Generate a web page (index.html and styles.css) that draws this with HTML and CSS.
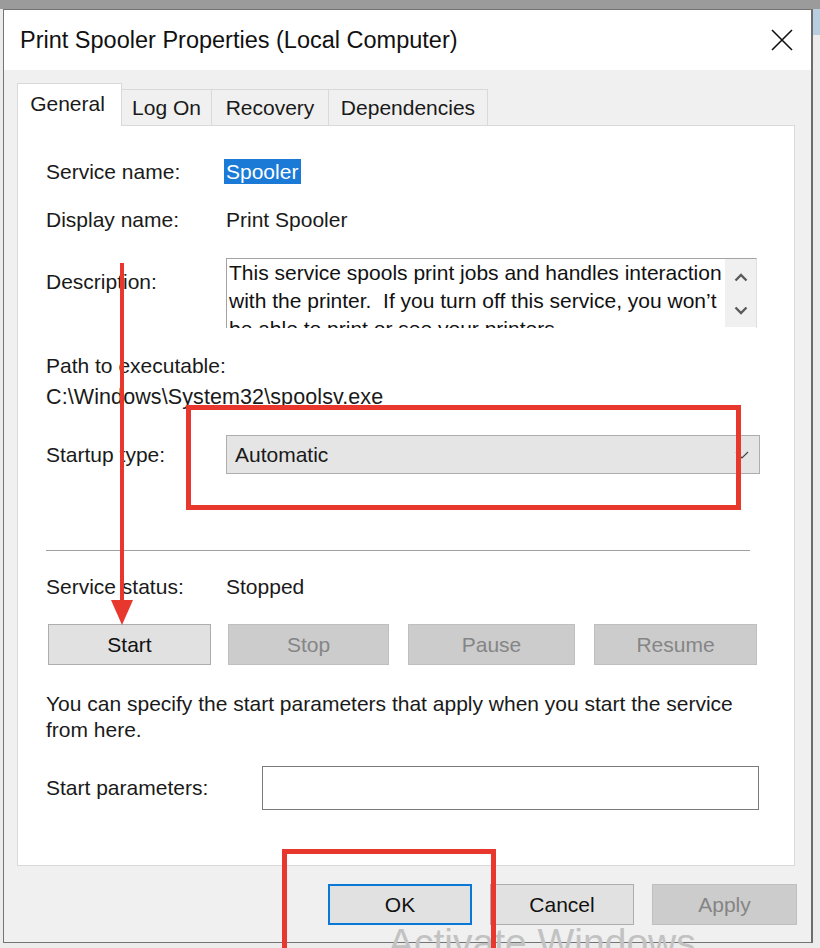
FILE: index.html
```html
<!DOCTYPE html>
<html>
<head>
<meta charset="utf-8">
<title>Print Spooler Properties</title>
<link rel="stylesheet" href="styles.css">
</head>
<body>
<div class="desktop">
  <div class="window">
    <div class="titlebar">
      <span class="title">Print Spooler Properties (Local Computer)</span>
      <svg class="close" width="22" height="22" viewBox="0 0 22 22"><path d="M1 1 L21 21 M21 1 L1 21" stroke="#111" stroke-width="1.6" fill="none"/></svg>
    </div>
    <div class="content">
      <div class="tabs">
        <div class="tab active t-general">General</div>
        <div class="tab t-logon">Log On</div>
        <div class="tab t-recovery">Recovery</div>
        <div class="tab t-deps">Dependencies</div>
      </div>
      <div class="panel">
        <div class="row r-name"><span class="label">Service name:</span><span class="value"><span class="selected">Spooler</span></span></div>
        <div class="row r-display"><span class="label">Display name:</span><span class="value">Print Spooler</span></div>
        <div class="row r-desc">
          <span class="label">Description:</span>
          <div class="descbox">
            <div class="desctext">This service spools print jobs and handles interaction<br>with the printer.&nbsp; If you turn off this service, you won’t<br>be able to print or see your printers.</div>
            <div class="scroll">
              <svg width="14" height="9" viewBox="0 0 14 9"><path d="M1.5 7.5 L7 2 L12.5 7.5" stroke="#5a5a5a" stroke-width="2.4" fill="none"/></svg>
              <svg width="14" height="9" viewBox="0 0 14 9"><path d="M1.5 1.5 L7 7 L12.5 1.5" stroke="#5a5a5a" stroke-width="2.4" fill="none"/></svg>
            </div>
          </div>
        </div>
        <div class="row r-path-label"><span class="label">Path to executable:</span></div>
        <div class="row r-path"><span class="path">C:\Windows\System32\spoolsv.exe</span></div>
        <div class="row r-startup">
          <span class="label">Startup type:</span>
          <div class="combo"><span>Automatic</span>
            <svg width="14" height="8" viewBox="0 0 14 8"><path d="M1 1 L7 7 L13 1" stroke="#444" stroke-width="1.2" fill="none"/></svg>
          </div>
        </div>
        <div class="separator"></div>
        <div class="row r-status"><span class="label">Service status:</span><span class="value">Stopped</span></div>
        <div class="svc-buttons">
          <button class="btn b-start">Start</button>
          <button class="btn disabled b-stop">Stop</button>
          <button class="btn disabled b-pause">Pause</button>
          <button class="btn disabled b-resume">Resume</button>
        </div>
        <p class="note">You can specify the start parameters that apply when you start the service<br>from here.</p>
        <div class="row r-params"><span class="label wide">Start parameters:</span><div class="input"></div></div>
      </div>
      <div class="footer">
        <button class="btn dlg default">OK</button>
        <button class="btn dlg">Cancel</button>
        <button class="btn dlg disabled apply">Apply</button>
      </div>
    </div>
  </div>
  <div class="watermark">Activate Windows</div>
  <div class="mark mark-startup"></div>
  <div class="mark mark-ok"></div>
  <svg class="arrow" width="26" height="366" viewBox="0 0 26 366">
    <rect x="11" y="0" width="4" height="340" fill="#e8382d"/>
    <polygon points="2,337 24,337 13,362" fill="#e8382d"/>
  </svg>
</div>
</body>
</html>
```

FILE: styles.css
```css
* { box-sizing: border-box; }
html, body { margin: 0; padding: 0; }
body {
  width: 820px;
  height: 948px;
  overflow: hidden;
  background:
    linear-gradient(#9b9b9b 0, #9b9b9b 9px, transparent 9px),
    linear-gradient(90deg, transparent 0, transparent 813px, #b9cde0 813px) 0 9px / 820px 26px no-repeat,
    #ececec;
  font-family: "Liberation Sans", Arial, sans-serif;
  color: #1a1a1a;
}
.desktop {
  position: relative;
  width: 820px;
  height: 948px;
  padding: 9px 0 0 3px;
  overflow: hidden;
}
.window {
  width: 810px;
  height: 934px;
  border: 1px solid #747474;
  border-right: 2px solid #6c6c6c;
  background: #f0f0f0;
  display: flex;
  flex-direction: column;
}
.titlebar {
  height: 60px;
  flex: none;
  background: #fff;
  display: flex;
  align-items: center;
  justify-content: space-between;
  padding: 0 18px 0 16px;
}
.title { font-size: 23.5px; color: #111; }
.close { display: block; }
.content { flex: 1; padding: 13px 0 0 13px; }
.tabs {
  display: flex;
  align-items: flex-end;
  height: 43px;
  margin-bottom: -1px;
  position: relative;
  z-index: 1;
}
.tab {
  font-size: 21px;
  height: 36px;
  margin-bottom: 1px;
  display: flex;
  align-items: center;
  justify-content: center;
  border: 1px solid #d9d9d9;
  border-bottom: none;
  border-left: none;
  background: #f0f0f0;
  color: #1a1a1a;
}
.tab.active {
  height: 43px;
  margin-bottom: 0;
  background: #fff;
  border-left: 1px solid #d9d9d9;
  padding: 0 4px 2px 0;
}
.t-general { width: 105px; }
.t-logon { width: 90px; }
.t-recovery { width: 117px; }
.t-deps { width: 159px; }
.panel {
  width: 778px;
  height: 741px;
  background: #fff;
  border: 1px solid #d9d9d9;
  padding: 0 0 0 28px;
}
.row {
  display: flex;
  align-items: center;
  font-size: 21px;
  line-height: 26px;
}
.label { width: 180px; flex: none; }
.label.wide { width: 216px; }
.r-name { margin-top: 33px; height: 26px; }
.selected {
  background: #1a7ad6;
  color: #fff;
  padding: 0 3px 0 2px;
  margin-left: -2px;
  display: inline-block;
  line-height: 25px;
}
.r-display { margin-top: 22px; height: 26px; }
.r-desc { margin-top: 25px; align-items: flex-start; height: 70px; }
.r-desc .label { padding-top: 11px; }
.descbox {
  width: 531px;
  height: 70px;
  border-top: 1px solid #a3a3a3;
  border-left: 1px solid #a3a3a3;
  border-right: 1px solid #e0e0e0;
  display: flex;
  overflow: hidden;
}
.desctext {
  flex: 1;
  padding-left: 2px;
  line-height: 28px;
  white-space: nowrap;
  overflow: hidden;
  color: #111;
}
.scroll {
  width: 31px;
  flex: none;
  background: #f0f0f0;
  display: flex;
  flex-direction: column;
  align-items: center;
  justify-content: space-between;
  padding: 14px 0 12px;
  height: 68px;
}
.scroll svg { display: block; }
.r-path-label { margin-top: 25px; height: 26px; }
.r-path { margin-top: 5px; height: 26px; }
.path { font-size: 21.5px; letter-spacing: 0.1px; }
.r-startup { margin-top: 25px; height: 39px; }
.combo {
  width: 534px;
  height: 39px;
  background: #e5e5e5;
  border: 1px solid #adadad;
  display: flex;
  align-items: center;
  justify-content: space-between;
  padding: 0 10px 0 8px;
}
.combo svg { display: block; }
.separator {
  margin-top: 76px;
  width: 704px;
  height: 2px;
  border-top: 1px solid #a0a0a0;
  border-bottom: 1px solid #fff;
}
.r-status { margin-top: 22px; height: 26px; }
.btn {
  font-family: "Liberation Sans", Arial, sans-serif;
  font-size: 21px;
  height: 41px;
  background: #e1e1e1;
  border: 1px solid #adadad;
  color: #111;
  padding: 0;
  margin: 0;
}
.btn.disabled {
  background: #cccccc;
  border-color: #bfbfbf;
  color: #858585;
}
.svc-buttons {
  margin-top: 24px;
  margin-left: 2px;
  display: flex;
}
.svc-buttons .b-start { width: 163px; }
.svc-buttons .b-stop { width: 161px; margin-left: 17px; }
.svc-buttons .b-pause { width: 167px; margin-left: 19px; }
.svc-buttons .b-resume { width: 163px; margin-left: 19px; }
.note {
  margin: 26px 0 0;
  font-size: 21px;
  line-height: 26px;
}
.r-params { margin-top: 23px; height: 44px; }
.input {
  width: 497px;
  height: 44px;
  background: #fff;
  border: 1px solid #7a7a7a;
}
.footer {
  display: flex;
  justify-content: flex-end;
  gap: 18px;
  margin-top: 18px;
  padding-right: 14px;
}
.btn.dlg { width: 144px; }
.btn.apply { width: 145px; }
.btn.default { border: 2px solid #0a78d7; }
.watermark {
  position: absolute;
  left: 388px;
  top: 923px;
  font-size: 39px;
  line-height: 39px;
  color: #c2c2c2;
  white-space: nowrap;
}
.mark {
  position: absolute;
  border: 5px solid #e8382d;
}
.mark-startup { left: 186px; top: 405px; width: 555px; height: 105px; }
.mark-ok { left: 282px; top: 849px; width: 214px; height: 120px; }
.arrow { position: absolute; left: 109px; top: 263px; }
```
